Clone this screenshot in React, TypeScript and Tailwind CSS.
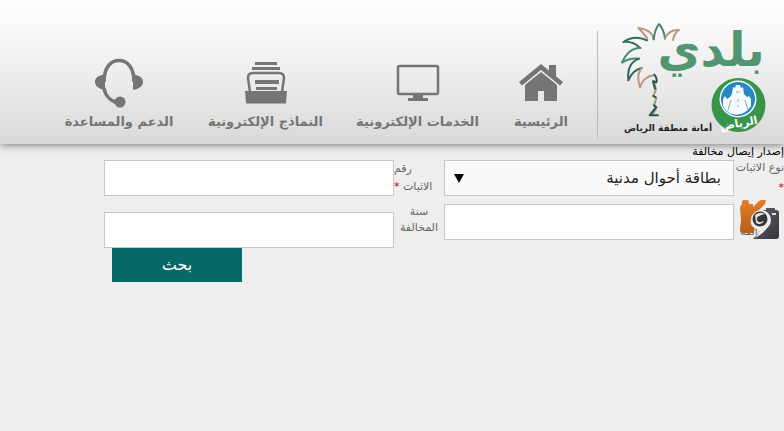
import type { ReactNode } from "react";

const labelClass = "w-[50px] shrink-0 text-[11px] text-[#666]";
const fieldClass = "h-9 w-full min-w-0 border border-[#c4c8c8] px-3 text-[#222] outline-none";

function HomeIcon() {
  return (
    <svg viewBox="0 0 44 38" className="h-[38px] w-11" fill="#747674">
      <path d="M30 1h7v13l-7-6z" />
      <path d="M22 0 0 18l3 3.500L22 6l19 15.500 3-3.500z" />
      <path d="M22 8 6 21v16h13V27h6v10h13V21z" />
    </svg>
  );
}

function MonitorIcon() {
  return (
    <svg viewBox="0 0 44 38" className="h-[38px] w-11" fill="#747674">
      <rect x="2" y="2" width="40" height="28" rx="1.500" fill="none" stroke="#747674" strokeWidth="2.500" />
      <path d="M17 31h10v3h5v3H12v-3h5z" />
    </svg>
  );
}

function FormsIcon() {
  return (
    <svg viewBox="0 0 44 44" className="h-11 w-11" fill="#747674">
      <path d="M11 1h22v3H11zM8 6h28v3H8zM11 19h24v4H11zM12 26h21v3H12z" />
      <path
        d="M6 31 4 17c0-3 1-5 5-5h26c4 0 5 2 5 5l-2 14"
        fill="none"
        stroke="#747674"
        strokeWidth="2.500"
      />
      <path d="M1 30h42l-1 12.500H2z" />
    </svg>
  );
}

function HeadsetIcon() {
  return (
    <svg viewBox="0 0 50 50" className="h-[50px] w-[50px]" fill="#747674">
      <path
        d="M10 24C10 9 17 2.500 25 2.500S40 9 40 24M10 30c1 7 6 13 14 15"
        fill="none"
        stroke="#747674"
        strokeWidth="3.500"
      />
      <path d="M11 15v17C5 31 1 28 1 24s3-6 7-7zM39 15v17c6-1 10-4 10-8s-3-6-7-7z" />
      <circle cx="26" cy="44" r="5.500" />
    </svg>
  );
}

function NavItem({ label, className, children }: { label: string; className: string; children: ReactNode }) {
  return (
    <a
      href="#"
      className={`flex shrink-0 flex-col items-center justify-end whitespace-nowrap text-[13px] leading-5 font-bold text-[#747674] ${className}`}
    >
      <span className="flex h-[50px] items-center">{children}</span>
      <span className="mt-1">{label}</span>
    </a>
  );
}

function BaladyLogo() {
  return (
    <svg viewBox="598 0 186 144" className="h-36 w-[186px]" role="img" aria-label="بلدي">
      {/* palm tree */}
      <g
        transform="translate(615 18) scale(.3333)"
        fill="none"
        strokeWidth="6"
        strokeLinejoin="round"
        strokeLinecap="round"
      >
        <path d="M116 64Q112 36 70 30Q83 42 97 62" stroke="#b39a7c" />
        <path d="M116 64Q119 35 132 18Q147 35 150 62" stroke="#4a8467" />
        <path d="M150 62Q160 35 192 36Q178 45 174 66" stroke="#b39a7c" />
        <path d="M96 67Q60 49 25 72Q52 68 76 90" stroke="#2f6f58" />
        <path d="M76 90Q42 88 21 134Q45 118 72 122" stroke="#4a8a6c" />
        <path d="M72 122Q35 135 40 187Q52 157 80 150" stroke="#286951" />
        <path d="M80 150Q62 170 75 208Q85 176 116 172" stroke="#b99a87" />
        <path d="M116 190L123 214L115 234L124 240L117 262L125 268L113 290" stroke="#a59a80" />
        <path d="M118 170Q128 182 124 193L114 190L120 212M115 234L122 238M117 262L123 268L104 292H129" stroke="#26594a" />
      </g>
      <text
        x="711"
        y="66"
        direction="rtl"
        textAnchor="middle"
        fontSize="47"
        fontWeight="700"
        fill="#529571"
        fontFamily="DejaVu Sans, sans-serif"
      >
        بلدي
      </text>
      {/* Riyadh municipality seal */}
      <circle cx="738.500" cy="105" r="27" fill="#36954a" />
      <circle cx="738" cy="99" r="18.500" fill="#fff" />
      <circle cx="738" cy="99" r="17" fill="#2687c5" />
      <path
        d="M723 106v-7l2-3 2 3 3-2 2-3 1-7 2 1 1-3h4l1 3 2-1 1 7 3 3 2-1 2 3v7c-7 11-22 12-28 0z"
        fill="#f5fbfc"
      />
      <path d="M736 92h4M738 99v3M738 105v2M731 100l-3 10M745 100l3 10" stroke="#83aab7" fill="none" />
      <text
        x="739"
        y="127"
        direction="rtl"
        textAnchor="middle"
        fontSize="11"
        fontWeight="700"
        fill="#fff"
        fontFamily="DejaVu Sans, sans-serif"
        transform="rotate(-10 739 125)"
      >
        الرياض
      </text>
      <text
        x="668"
        y="131"
        direction="rtl"
        textAnchor="middle"
        fontSize="9"
        fontWeight="700"
        fill="#222"
        fontFamily="DejaVu Sans, sans-serif"
      >
        أمانة منطقة الرياض
      </text>
    </svg>
  );
}

function CameraMark() {
  return (
    <svg viewBox="0 0 42 42" className="absolute top-[-5px] right-1 h-[42px] w-[42px]" aria-hidden="true">
      <defs>
        <linearGradient id="orange" x1="0" y1="0" x2="0" y2="1">
          <stop offset="0" stopColor="#e47d28" />
          <stop offset="1" stopColor="#b95c1c" />
        </linearGradient>
        <linearGradient id="steel" x1="0" y1="0" x2="1" y2="1">
          <stop offset="0" stopColor="#61616a" />
          <stop offset="1" stopColor="#34343b" />
        </linearGradient>
      </defs>
      <path
        d="M4 5V3q0-2 2-2h3q2 0 2 2v2h4v3l6-6q1-1 3-1h4l-1 4-8 8c-6 3-8 9-5 14l3 3-2 4H5q-3 0-3-3l1-10-1-12q0-2 2-4z"
        fill="url(#orange)"
      />
      <path d="M25 11h3v-2h9v2h1q3 0 3 3v23q0 3-3 3H15l10-11z" fill="url(#steel)" />
      <circle cx="23" cy="21" r="10" fill="#eee" />
      <path d="M31 26q-3 7-14 13l7-10z" fill="#eee" />
      <circle cx="22" cy="20" r="7.500" fill="#34343c" />
      <path d="M17 16q5-4 10-1l-4 1-3 3 1 4 5-1q-3 5-8 2z" fill="#ddd" />
      <circle cx="22" cy="20" r="3" fill="#34343c" />
      <path d="M34 14h4v2h-4z" fill="#ddd" />
    </svg>
  );
}

export default function App() {
  return (
    <div dir="rtl" className="min-h-screen bg-[#eee] font-['DejaVu_Sans',sans-serif]">
      <header className="flex h-36 bg-linear-to-b from-white via-[#eee] to-[#d9d9d9] shadow-[0_1px_8px_#777]">
        <a href="#" className="shrink-0">
          <BaladyLogo />
        </a>
        <div className="mt-[31px] h-[107px] w-px shrink-0 bg-[#bbb]" />
        <nav className="flex gap-[33px] pr-7 pb-3">
          <NavItem label="الرئيسية" className="w-14">
            <HomeIcon />
          </NavItem>
          <NavItem label="الخدمات الإلكترونية" className="w-[125px]">
            <MonitorIcon />
          </NavItem>
          <NavItem label="النماذج الإلكترونية" className="w-[113px]">
            <FormsIcon />
          </NavItem>
          <NavItem label="الدعم والمساعدة" className="w-[114px]">
            <HeadsetIcon />
          </NavItem>
        </nav>
      </header>

      <main>
        <h1 className="h-4 text-[11px] leading-4 text-black">إصدار إيصال مخالفة</h1>
        <form className="flex pl-[104px]" onSubmit={(e) => e.preventDefault()}>
          <div className="flex flex-1 flex-col gap-2">
            <div className="flex h-9">
              <label htmlFor="idType" className={`${labelClass} leading-4`}>
                <span className="text-[11px] whitespace-nowrap">نوع الاثبات</span>
                <span className="block pt-1 text-red-700">*</span>
              </label>
              <div className="relative flex-1">
                <select id="idType" className={`${fieldClass} appearance-none bg-[#fafafa] text-[15px]`}>
                  <option>بطاقة أحوال مدنية</option>
                </select>
                <svg viewBox="0 0 10 9" className="pointer-events-none absolute top-3.5 left-2.5 h-[9px] w-2.5">
                  <path d="M0 0h10L5 9z" />
                </svg>
              </div>
            </div>
            <div className="relative flex h-9">
              <label htmlFor="violationNo" className={`${labelClass} pt-1 text-center leading-4`}>
                رقم المخالفة
              </label>
              <div className="flex-1">
                <input id="violationNo" className={`${fieldClass} bg-white`} />
              </div>
              <CameraMark />
            </div>
          </div>

          <div className="flex flex-1 flex-col">
            <div className="flex h-9">
              <label htmlFor="idNo" className={`${labelClass} text-left leading-[18px]`}>
                <span className="block">رقم</span>
                <span className="whitespace-nowrap">
                  الاثبات <span className="text-red-700">*</span>
                </span>
              </label>
              <div className="flex-1">
                <input id="idNo" className={`${fieldClass} bg-white`} />
              </div>
            </div>
            <div className="flex h-[52px]">
              <label htmlFor="year" className={`${labelClass} pt-2 text-center leading-4`}>
                سنة المخالفة
              </label>
              <div className="flex-1 pt-4">
                <input id="year" className={`${fieldClass} bg-white`} />
              </div>
            </div>
            <button type="submit" className="ml-2 h-[34px] w-[130px] self-end bg-[#056a65] text-base leading-5 text-white">
              بحث
            </button>
          </div>
        </form>
      </main>
    </div>
  );
}
